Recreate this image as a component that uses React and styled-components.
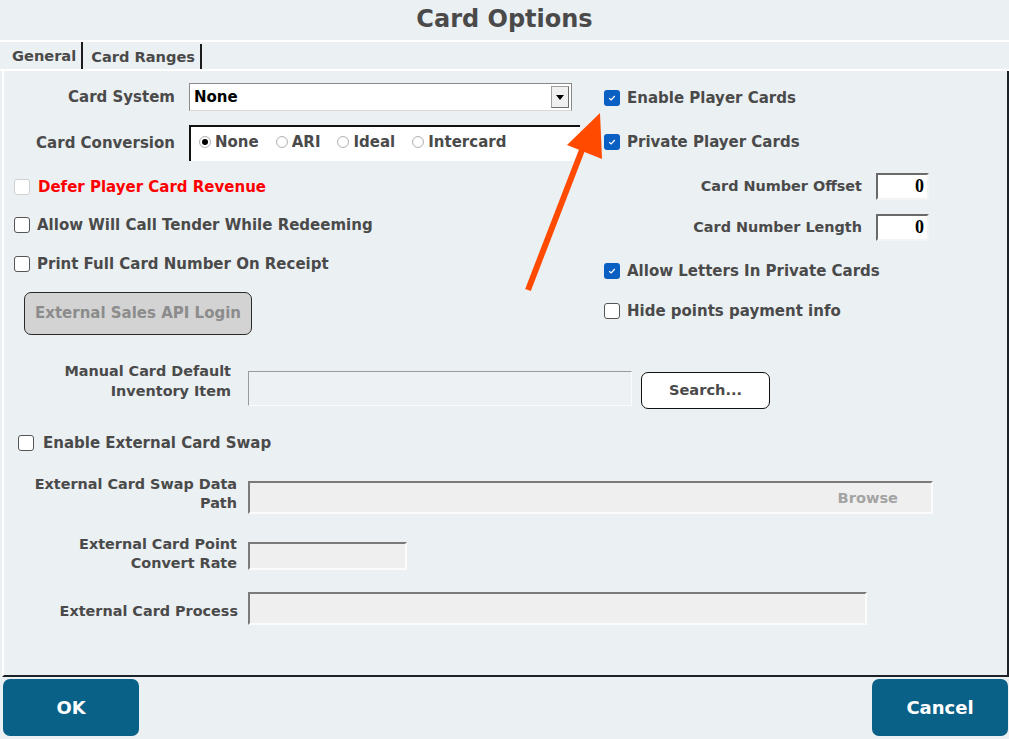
import React from 'react';
import styled, { createGlobalStyle } from 'styled-components';

const bg = '#ebf0f3';
const text = '#4a4a4a';

const GlobalStyle = createGlobalStyle`
  body {
    margin: 0;
    background: ${bg};
    font-family: "DejaVu Sans", Verdana, sans-serif;
  }
`;

const Page = styled.div`
  position: relative;
  width: 1009px;
  height: 739px;
  display: flex;
  flex-direction: column;
  background: ${bg};
  color: ${text};
  overflow: hidden;
`;

const Title = styled.h1`
  margin: 0;
  height: 40px;
  display: flex;
  align-items: center;
  justify-content: center;
  font-size: 24px;
  font-weight: bold;
  color: #4a4a4a;
  padding-bottom: 2px;
  box-sizing: border-box;
`;

const TabBar = styled.div`
  height: 27px;
  border-top: 2px solid #fff;
  border-bottom: 2px solid #fff;
  display: flex;
  align-items: stretch;
  padding-left: 4px;
`;

const Tab = styled.div`
  display: flex;
  align-items: center;
  padding: 0 5px 0 8px;
  font-size: 14.6px;
  font-weight: bold;
  color: ${text};
  border-right: 2px solid #1c1c1c;
  margin-top: ${p => (p.$active ? 0 : 2)}px;
`;

const Panel = styled.div`
  flex: 1;
  margin-left: 2px;
  border-left: 2px solid #fff;
  border-right: 2px solid #1c2328;
  border-bottom: 2px solid #1c2328;
  padding-top: 12px;
  display: flex;
  flex-direction: column;
`;

const TopGrid = styled.div`
  display: grid;
  grid-template-columns: 586px 1fr;
`;

const Column = styled.div`
  display: flex;
  flex-direction: column;
  padding-left: ${p => p.$pl || 0}px;
  padding-right: ${p => p.$pr || 0}px;
`;

const Row = styled.div`
  display: flex;
  align-items: ${p => p.$align || 'center'};
  justify-content: ${p => p.$justify || 'flex-start'};
  height: ${p => (p.$h ? `${p.$h}px` : 'auto')};
  margin-top: ${p => p.$mt || 0}px;
  gap: ${p => p.$gap || 0}px;
`;

const Label = styled.label`
  width: ${p => p.$w}px;
  flex-shrink: 0;
  text-align: right;
  font-size: ${p => p.$fs || 14.4}px;
  font-weight: bold;
  line-height: ${p => p.$lh || 19}px;
  color: ${text};
  padding-right: ${p => p.$pr || 0}px;
  margin-top: ${p => p.$mt || 0}px;
  box-sizing: border-box;
`;

const Select = styled.div`
  position: relative;
  width: 383px;
  height: 28px;
  box-sizing: border-box;
  background: #fff;
  border: 1px solid #8a8a8a;
  border-bottom-color: #d8d8d8;
  display: flex;
  align-items: center;
  padding-left: 4px;
  font-size: 15px;
  font-weight: bold;
  color: #000;
`;

const DropButton = styled.span`
  position: absolute;
  right: 2px;
  top: 2px;
  width: 18px;
  height: 22px;
  box-sizing: border-box;
  background: #f0f0f0;
  border: 1px solid #a0a0a0;
  border-right-color: #6e6e6e;
  border-bottom-color: #6e6e6e;
  display: flex;
  align-items: center;
  justify-content: center;

  &::after {
    content: '';
    border-left: 4px solid transparent;
    border-right: 4px solid transparent;
    border-top: 5px solid #000;
  }
`;

const RadioBox = styled.div`
  width: 391px;
  height: 36px;
  box-sizing: border-box;
  background: #fff;
  border-top: 2px solid #111;
  border-left: 2px solid #111;
  display: flex;
  align-items: center;
  padding: 0 0 4px 8px;
  gap: 17px;
`;

const RadioItem = styled.span`
  display: flex;
  align-items: center;
  gap: 4px;
  font-size: 15px;
  font-weight: bold;
  color: ${text};
`;

const RadioDot = styled.span`
  width: 12px;
  height: 12px;
  box-sizing: border-box;
  border-radius: 50%;
  border: 1px solid #b4b4b4;
  background: radial-gradient(circle, #fff 55%, #e8e8e8 100%);
  display: flex;
  align-items: center;
  justify-content: center;

  &::after {
    content: '';
    width: 6px;
    height: 6px;
    border-radius: 50%;
    background: ${p => (p.$checked ? '#000' : 'transparent')};
  }
`;

const CheckRow = styled.label`
  display: flex;
  align-items: center;
  gap: ${p => p.$gap || 8}px;
  height: ${p => p.$h || 24}px;
  margin-top: ${p => p.$mt || 0}px;
  padding-left: ${p => p.$pl || 0}px;
  font-size: 15px;
  font-weight: bold;
  color: ${p => (p.$danger ? '#ff0000' : text)};
`;

const Box = styled.span`
  width: 16px;
  height: 16px;
  box-sizing: border-box;
  border-radius: 3px;
  flex-shrink: 0;
  display: flex;
  align-items: center;
  justify-content: center;
  background: ${p => (p.$checked ? '#0a5fc2' : '#fff')};
  border: ${p =>
    p.$checked ? 'none' : p.$disabled ? '1px solid #d0d0d0' : '1.5px solid #555'};
`;

const Check = ({ checked, disabled }) => (
  <Box $checked={checked} $disabled={disabled}>
    {checked && (
      <svg width="10" height="10" viewBox="0 0 10 10">
        <path d="M2.2 5.2 L4.2 7 L7.8 3" fill="none" stroke="#fff" strokeWidth="1.2" />
      </svg>
    )}
  </Box>
);

const NumberInput = styled.div`
  width: 53px;
  height: 27px;
  box-sizing: border-box;
  background: #fff;
  border: 2px solid #f4f4f4;
  border-top-color: #6a6a6a;
  border-left-color: #6a6a6a;
  display: flex;
  align-items: center;
  justify-content: flex-end;
  padding-right: 3px;
  font-family: "Liberation Serif", "Times New Roman", serif;
  font-weight: bold;
  font-size: 18px;
  color: #000;
`;

const GrayButton = styled.div`
  width: 228px;
  height: 43px;
  box-sizing: border-box;
  margin-top: ${p => p.$mt || 0}px;
  margin-left: ${p => p.$ml || 0}px;
  background: #d3d3d3;
  border: 1px solid #2a2a2a;
  border-radius: 7px;
  display: flex;
  align-items: center;
  justify-content: center;
  padding-bottom: 2px;
  font-size: 15px;
  font-weight: bold;
  color: #8c8c8c;
`;

const WhiteButton = styled.div`
  width: 129px;
  height: 37px;
  box-sizing: border-box;
  margin-top: ${p => p.$mt || 0}px;
  margin-left: 9px;
  background: #fff;
  border: 1px solid #111;
  border-radius: 7px;
  display: flex;
  align-items: center;
  justify-content: center;
  padding-bottom: 3px;
  font-size: 14.6px;
  font-weight: bold;
  color: ${text};
`;

const Field = styled.div`
  width: ${p => p.$w}px;
  height: ${p => p.$h}px;
  margin-top: ${p => p.$mt || 0}px;
  box-sizing: border-box;
  background: ${p => (p.$shaded ? '#efefef' : '#edf1f4')};
  border: ${p => (p.$shaded ? 2 : 1)}px solid #fbfbfb;
  border-top-color: ${p => (p.$shaded ? '#7a7a7a' : '#9a9a9a')};
  border-left-color: ${p => (p.$shaded ? '#7a7a7a' : '#9a9a9a')};
  display: flex;
  align-items: center;
  justify-content: flex-end;
  padding-right: 33px;
  font-size: 14.6px;
  font-weight: bold;
  color: #a3a3a3;
`;

const Footer = styled.div`
  height: 62px;
  box-sizing: border-box;
  padding: 2px 1px 3px 3px;
  display: flex;
  justify-content: space-between;
`;

const ActionButton = styled.button`
  width: 136px;
  height: 57px;
  border: none;
  border-radius: 7px;
  background: #0a6188;
  color: #fff;
  font-family: inherit;
  font-size: 18px;
  font-weight: bold;
  padding-bottom: 2px;
`;

const Arrow = styled.svg`
  position: absolute;
  left: 0;
  top: 0;
  pointer-events: none;
`;

const App = () => (
  <Page>
    <GlobalStyle />
    <Title>Card Options</Title>
    <TabBar>
      <Tab $active>General</Tab>
      <Tab>Card Ranges</Tab>
    </TabBar>
    <Panel>
      <TopGrid>
        <Column>
          <Row $h={28} $gap={14}>
            <Label $w={171} $fs={15}>
              Card System
            </Label>
            <Select>
              None
              <DropButton />
            </Select>
          </Row>
          <Row $h={36} $mt={14} $gap={14}>
            <Label $w={171} $fs={15}>
              Card Conversion
            </Label>
            <RadioBox>
              <RadioItem>
                <RadioDot $checked />
                None
              </RadioItem>
              <RadioItem>
                <RadioDot />
                ARI
              </RadioItem>
              <RadioItem>
                <RadioDot />
                Ideal
              </RadioItem>
              <RadioItem>
                <RadioDot />
                Intercard
              </RadioItem>
            </RadioBox>
          </Row>
          <CheckRow $mt={14} $pl={10} $danger>
            <Check disabled />
            Defer Player Card Revenue
          </CheckRow>
          <CheckRow $mt={14} $pl={10} $gap={7}>
            <Check />
            Allow Will Call Tender While Redeeming
          </CheckRow>
          <CheckRow $mt={15} $pl={10} $gap={7}>
            <Check />
            Print Full Card Number On Receipt
          </CheckRow>
          <GrayButton $mt={16} $ml={20}>
            External Sales API Login
          </GrayButton>
        </Column>
        <Column $pl={14} $pr={78}>
          <CheckRow $h={28} $mt={1} $gap={7}>
            <Check checked />
            Enable Player Cards
          </CheckRow>
          <CheckRow $h={28} $mt={16} $gap={7}>
            <Check checked />
            Private Player Cards
          </CheckRow>
          <Row $h={27} $mt={17} $gap={14} $justify="flex-end">
            <Label $w={220}>Card Number Offset</Label>
            <NumberInput>0</NumberInput>
          </Row>
          <Row $h={27} $mt={14} $gap={14} $justify="flex-end">
            <Label $w={220}>Card Number Length</Label>
            <NumberInput>0</NumberInput>
          </Row>
          <CheckRow $h={28} $mt={16} $gap={7}>
            <Check checked />
            Allow Letters In Private Cards
          </CheckRow>
          <CheckRow $h={28} $mt={12} $gap={7}>
            <Check />
            Hide points payment info
          </CheckRow>
        </Column>
      </TopGrid>

      <Row $align="flex-start" $mt={26}>
        <Label $w={244} $pr={17} $lh={20}>
          Manual Card Default
          <br />
          Inventory Item
        </Label>
        <Field $w={384} $h={35} $mt={10} />
        <WhiteButton $mt={11}>Search...</WhiteButton>
      </Row>

      <CheckRow $mt={22} $pl={14} $gap={9}>
        <Check />
        Enable External Card Swap
      </CheckRow>

      <Row $align="flex-start" $mt={20}>
        <Label $w={244} $pr={11}>
          External Card Swap Data
          <br />
          Path
        </Label>
        <Field $w={685} $h={33} $mt={6} $shaded>
          Browse
        </Field>
      </Row>

      <Row $align="flex-start" $mt={21}>
        <Label $w={244} $pr={11}>
          External Card Point
          <br />
          Convert Rate
        </Label>
        <Field $w={159} $h={28} $mt={7} $shaded />
      </Row>

      <Row $align="flex-start" $mt={19}>
        <Label $w={244} $pr={10} $mt={10}>
          External Card Process
        </Label>
        <Field $w={619} $h={33} $shaded />
      </Row>
    </Panel>
    <Footer>
      <ActionButton>OK</ActionButton>
      <ActionButton>Cancel</ActionButton>
    </Footer>

    <Arrow width="1009" height="739" viewBox="0 0 1009 739">
      <line x1="528" y1="290" x2="582" y2="150" stroke="#ff4a00" strokeWidth="6" />
      <polygon points="600,113 567,145 602,159" fill="#ff4a00" />
    </Arrow>
  </Page>
);

export default App;
